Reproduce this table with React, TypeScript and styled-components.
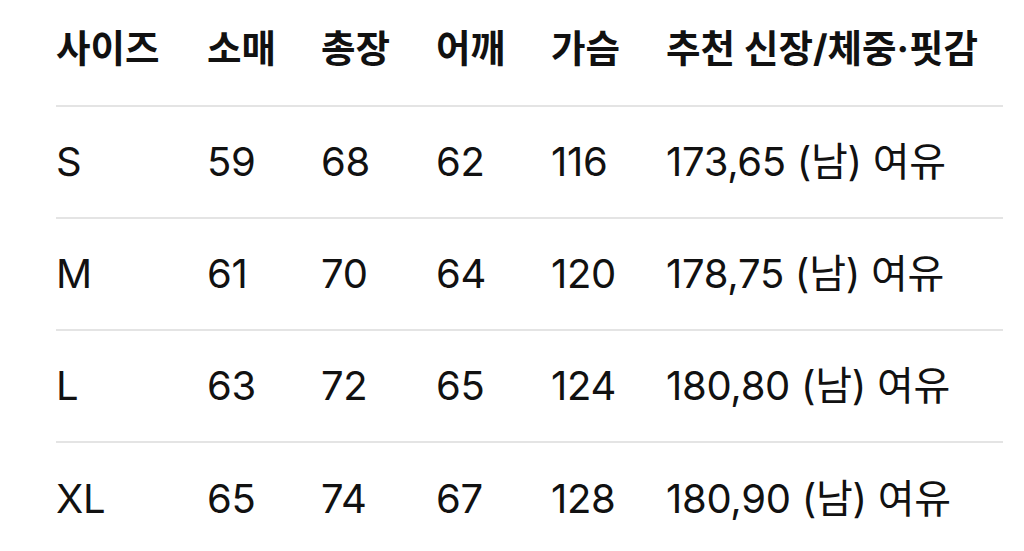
import React from 'react';
import styled, { createGlobalStyle } from 'styled-components';

const GlobalStyle = createGlobalStyle`
  html, body {
    margin: 0;
    padding: 0;
    background: #fff;
  }
  body {
    font-family: Inter, "Noto Sans CJK KR", sans-serif;
    color: #111;
    overflow: hidden;
  }
`;

const Table = styled.div`
  width: 947px;
  margin-left: 56px;
`;

const Row = styled.div<{ $header?: boolean }>`
  display: grid;
  grid-template-columns: 151px 114px 115px 115px 115px 1fr;
  align-items: center;
  box-sizing: border-box;
  height: ${(p) => (p.$header ? '107px' : '112px')};
  padding-bottom: ${(p) => (p.$header ? '8px' : '0')};
  border-bottom: 2px solid #e4e4e4;
  font-size: ${(p) => (p.$header ? '37.5px' : '40px')};
  letter-spacing: ${(p) => (p.$header ? '0' : '-0.3px')};
  font-weight: ${(p) => (p.$header ? 700 : 400)};

  &:last-child {
    border-bottom: none;
  }
`;

const Cell = styled.div`
  white-space: nowrap;
  line-height: 1;
`;

const header = ['사이즈', '소매', '총장', '어깨', '가슴', '추천 신장/체중·핏감'];

const rows = [
  ['S', '59', '68', '62', '116', '173,65 (남) 여유'],
  ['M', '61', '70', '64', '120', '178,75 (남) 여유'],
  ['L', '63', '72', '65', '124', '180,80 (남) 여유'],
  ['XL', '65', '74', '67', '128', '180,90 (남) 여유'],
];

export default function App() {
  return (
    <>
      <GlobalStyle />
      <Table>
        <Row $header>
          {header.map((h) => (
            <Cell key={h}>{h}</Cell>
          ))}
        </Row>
        {rows.map((r) => (
          <Row key={r[0]}>
            {r.map((c, i) => (
              <Cell key={i}>{c}</Cell>
            ))}
          </Row>
        ))}
      </Table>
    </>
  );
}
